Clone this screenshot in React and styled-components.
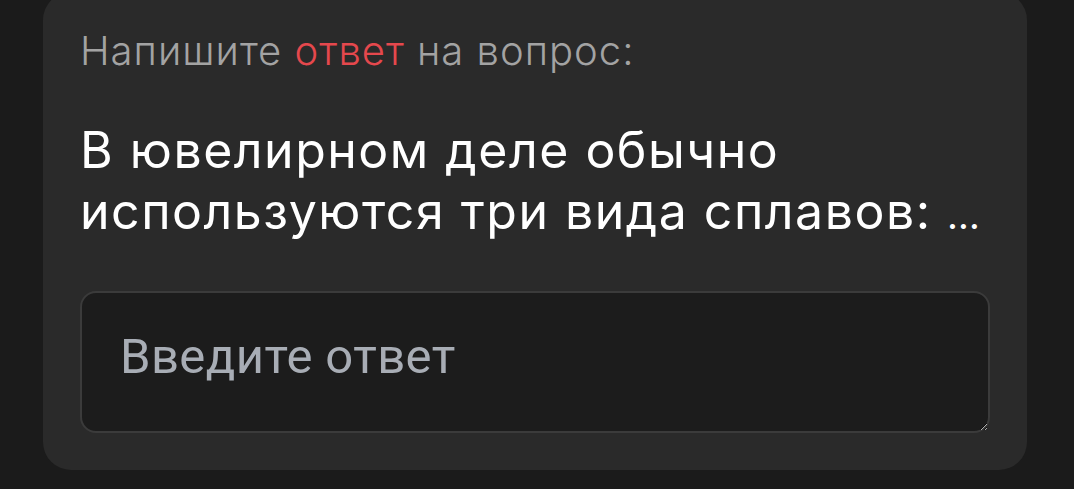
import React from 'react';
import styled, { createGlobalStyle } from 'styled-components';

const GlobalStyle = createGlobalStyle`
  html, body {
    margin: 0;
    padding: 0;
    background: #1b1b1b;
    overflow: hidden;
  }
  * {
    box-sizing: border-box;
  }
`;

const Page = styled.div`
  width: 1074px;
  height: 489px;
  background: #1b1b1b;
  padding: 0 47px 0 43px;
`;

const Card = styled.section`
  margin-top: -8px;
  background: #2a2a2a;
  border-radius: 28px;
  padding: 35px 37px 37px 37px;
  display: flex;
  flex-direction: column;
`;

const Prompt = styled.p`
  margin: 0;
  font-family: Inter, "Noto Sans", sans-serif;
  font-weight: 300;
  font-size: 40px;
  letter-spacing: 1px;
  line-height: 48px;
  color: #a3a3a3;
`;

const Accent = styled.span`
  color: #e5484d;
`;

const Question = styled.h2`
  margin: 45px 0 0;
  font-family: Inter, "Noto Sans", sans-serif;
  font-weight: 400;
  font-size: 50px;
  letter-spacing: 1.5px;
  line-height: 61px;
  color: #ffffff;
`;

const Ellipsis = styled.span`
  font-size: 38px;
  letter-spacing: 0;
`;

const AnswerField = styled.textarea`
  margin-top: 45px;
  height: 142px;
  width: 100%;
  background: #1c1c1c;
  border: 2px solid #3b3b3b;
  border-radius: 16px;
  padding: 36px 38px;
  font-family: Roboto, "Noto Sans", sans-serif;
  font-size: 49px;
  letter-spacing: 0.4px;
  line-height: 56px;
  color: #ffffff;
  outline: none;

  &::placeholder {
    color: #a8adb5;
  }
`;

export default function App() {
  return (
    <>
      <GlobalStyle />
      <Page>
        <Card>
          <Prompt>
            Напишите <Accent>ответ</Accent> на вопрос:
          </Prompt>
          <Question>
            В ювелирном деле обычно используются три вида сплавов: <Ellipsis>…</Ellipsis>
          </Question>
          <AnswerField placeholder="Введите ответ" />
        </Card>
      </Page>
    </>
  );
}
